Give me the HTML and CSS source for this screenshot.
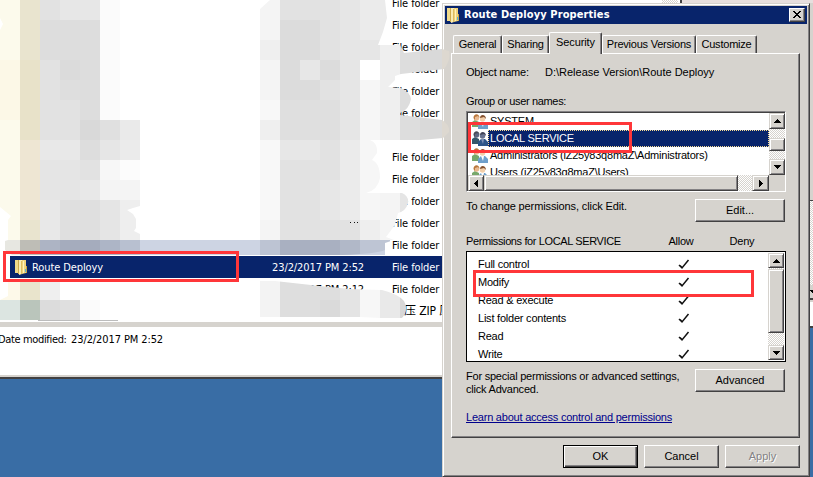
FILE: index.html
```html
<!DOCTYPE html>
<html lang="en">
<head>
<meta charset="utf-8">
<title>Route Deployy Properties</title>
<link rel="stylesheet" href="styles.css">
</head>
<body>
<svg class="defs" width="0" height="0">
  <defs>
    <symbol id="folder" viewBox="0 0 14 16">
      <path d="M1 1h4v13H1z" fill="#f0da8a"/><path d="M4 1h1v14H4z" fill="#cdaa4c"/><path d="M5 1h3v14l-3 1z" fill="#f9ecb4"/><path d="M7 2h1v13H7z" fill="#dcbc60"/><path d="M8 1h4v13l-4 1z" fill="#eed27c"/><path d="M9 2h1v12H9z" fill="#fff3bc"/><path d="M12 7h1v7h-1z" fill="#c9a548"/><path d="M11 10h1v3h-1z" fill="#55b5d9"/>
    </symbol>
    <symbol id="users" viewBox="0 0 16 16">
      <path d="M0 14V9l3-2 4 2v5z" fill="#77a86b"/><circle cx="4.5" cy="5" r="2.7" fill="#e9b990"/><path d="M1.500 5c0-5 6-5 6 0L6 3 3 4 3 7z" fill="#b9773c"/>
      <path d="M6 16v-4l3-3h4l3 3v4z" fill="#6f9fcb"/><path d="M9 9h3l-1 5z" fill="#fff"/><circle cx="10.5" cy="6" r="2.700" fill="#f3cfaa"/><path d="M8 5c0-4 6-4 6 1l-2-2z" fill="#85512e"/>
    </symbol>
    <symbol id="users-dark" viewBox="0 0 16 16">
      <path d="M0 14V9l3-2 4 2v5z" fill="#36576a"/><circle cx="4.5" cy="5" r="2.7" fill="#5d6680"/><path d="M1.5 5c0-5 6-5 6 0L6 3 3 4 3 7z" fill="#4a4b58"/>
      <path d="M6 16v-4l3-3h4l3 3v4z" fill="#2d5588"/><path d="M9 9h3l-1 5z" fill="#7f92b5"/><circle cx="10.5" cy="6" r="2.7" fill="#69738f"/><path d="M8 5c0-4 6-4 6 1l-2-2z" fill="#414357"/>
    </symbol>
    <symbol id="check" viewBox="0 0 12 11"><path d="M1 6l3 3 6.500-8M2 6.500l2 2" fill="none" stroke="#111" stroke-width="1.500"/></symbol>
    <symbol id="up" viewBox="0 0 7 4"><path d="M3 0h1v1h1v1h1v1h1v1H0V3h1V2h1V1h1z"/></symbol>
    <symbol id="down" viewBox="0 0 7 4"><path d="M0 0h7v1H6v1H5v1H4v1H3V3H2V2H1V1H0z"/></symbol>
    <symbol id="left" viewBox="0 0 4 7"><path d="M4 0v7H3V6H2V5H1V4H0V3h1V2h1V1h1V0z"/></symbol>
    <symbol id="right" viewBox="0 0 4 7"><path d="M0 0v7h1V6h1V5h1V4h1V3H3V2H2V1H1V0z"/></symbol>
  </defs>
</svg>

<div class="desktop">
  <section class="explorer">
    <div class="files">
      <div class="file"><span></span><span></span><span>File folder</span></div>
      <div class="file"><span></span><span></span><span>File folder</span></div>
      <div class="file"><span></span><span></span><span>File folder</span></div>
      <div class="file"><span></span><span></span><span>File folder</span></div>
      <div class="file"><span></span><span></span><span>File folder</span></div>
      <div class="file"><span></span><span></span><span>File folder</span></div>
      <div class="file"></div>
      <div class="file"><span></span><span></span><span>File folder</span></div>
      <div class="file"><span></span><span></span><span>File folder</span></div>
      <div class="file"><span></span><span></span><span>File folder</span></div>
      <div class="file"><span></span><span></span><span>File folder</span></div>
      <div class="file"><span></span><span></span><span>File folder</span></div>
      <div class="file selected"><span class="name"><svg width="14" height="16"><use href="#folder"/></svg>Route Deployy</span><span class="date">23/2/2017 PM 2:52</span><span>File folder</span></div>
      <div class="file"><span></span><span class="date">23/2/2017 PM 2:12</span><span>File folder</span></div>
      <div class="file"><span></span><span></span><span class="zip">压 ZIP 压</span></div>
    </div>
    <div class="details"><span class="label">Date modified:</span><span class="date">23/2/2017 PM 2:52</span></div>
  </section>

  <svg class="mosaic" width="452" height="322" viewBox="0 0 452 322" shape-rendering="crispEdges">
    <defs>
      <clipPath id="blob-left"><path d="M0 0H120V120H140V206L133 208L127 210L133 214L136 219V228L134 231L140 234V255H12L5 250V241L8 240V220L11 216L0 207V30L3 24L0 18z"/></clipPath>
      <clipPath id="blob-right"><path d="M270 0H385L387 18L383 32L378 45H400L404 53L442 49L449 51Q451 60 444 69L401 74L395 76V80L388 87L401 88Q410 92 411 99Q409 110 400 113V115L442 120Q450 125 449 132L443 138L420 140H370Q378 143 377 153L372 160Q380 163 380 178Q378 190 366 193H402Q409 196 408 203Q406 211 398 213L395 225L386 237L394 240L385 243L385 250Q376 254 342 255H260V9z"/></clipPath>
      <clipPath id="blob-base"><path d="M8 282H60V300H100V320H0V300L8 296zM260 281H275L320 286L350 289L382 290Q398 294 404 301Q409 310 402 318H380L360 317H260z"/></clipPath>
    </defs>
    <rect x="20" y="240" width="365" height="15" fill="#cdd4e3"/>
    <g clip-path="url(#blob-left)">
      <path fill="#fcfaec" d="M0 0h20v240H0z"/><path fill="#fcf8e7" d="M0 60h20v60H0z"/>
      <path fill="#e9e4cf" d="M20 0h20v240H20z"/><path fill="#e8e2c9" d="M20 60h20v80H20z"/><path fill="#eee6d3" d="M20 140h20v80H20z"/>
      <path fill="#e2e2e2" d="M40 0h60v240H40z"/><path fill="#e7e7e7" d="M60 0h40v20H60z"/><path fill="#fbfbfb" d="M100 0h20v120h-20z"/>
      <path fill="#ddd" d="M40 20h60v40H40zM80 60h20v60H80z"/><path fill="#dbdbdb" d="M60 60h20v20H60z"/><path fill="#dedede" d="M60 80h20v20H60z"/>
      <path fill="#d9d9d9" d="M80 120h20v20H80z"/><path fill="#e0e0e0" d="M100 120h20v20h-20z"/><path fill="#eaeaea" d="M120 120h20v20h-20z"/>
      <path fill="#e8e8e8" d="M40 140h40v20H40z"/><path fill="#ddd" d="M80 140h20v20H80z"/><path fill="#e6e6e6" d="M100 140h20v20h-20z"/><path fill="#ebebeb" d="M120 140h20v20h-20z"/>
      <path fill="#e5e5e5" d="M40 160h40v40H40z"/><path fill="#f7f7f7" d="M100 160h20v20h-20z"/><path fill="#fcfcfc" d="M120 160h20v20h-20z"/>
      <path fill="#e8e8e8" d="M80 180h20v20H80zM40 200h20v40H40z"/><path fill="#f4f4f4" d="M100 180h40v20h-40z"/>
      <path fill="#dfdfdf" d="M60 200h40v40H60z"/><path fill="#e5e5e5" d="M100 200h20v40h-20z"/><path fill="#eee" d="M120 200h20v40h-20z"/>
      <path fill="#e7e7e1" d="M0 240h20v15H0z"/><path fill="#bebdb6" d="M20 240h20v15H20z"/><path fill="#adb4c4" d="M40 240h20v15H40z"/><path fill="#a5acbd" d="M60 240h40v15H60z"/><path fill="#adb5c6" d="M100 240h20v15h-20z"/><path fill="#b8c0d0" d="M120 240h20v15h-20z"/>
    </g>
    <g clip-path="url(#blob-right)">
      <path fill="#f4f4f4" d="M260 0h20v240h-20z"/><path fill="#efefef" d="M260 40h20v20h-20zM260 120h20v20h-20z"/><path fill="#f8f8f8" d="M260 100h20v20h-20zM260 140h20v80h-20z"/>
      <path fill="#e2e2e2" d="M280 0h80v240h-80z"/><path fill="#dcdcdc" d="M280 20h40v40h-40zM280 60h20v40h-20zM320 60h20v20h-20zM300 80h20v60h-20z"/><path fill="#dfdfdf" d="M280 100h60v40h-60z"/><path fill="#e7e7e7" d="M300 60h20v20h-20zM280 140h40v20h-40zM320 180h20v40h-20z"/>
      <path fill="#e6e6e6" d="M340 0h20v140h-20z"/><path fill="#ebebeb" d="M340 140h20v80h-20zM360 0h40v40h-40z"/><path fill="#e6e6e6" d="M360 40h20v20h-20z"/>
      <path fill="#fff" d="M360 60h20v20h-20z"/><path fill="#f6f6f6" d="M360 80h20v140h-20z"/><path fill="#eee" d="M360 220h20v20h-20z"/>
      <path fill="#efefef" d="M380 40h20v100h-20z"/><path fill="#f4f4f4" d="M380 140h20v100h-20z"/><path fill="#ddd" d="M400 40h20v100h-20z"/><path fill="#d9d9d9" d="M420 40h22v100h-22z"/><path fill="#e5e5e5" d="M400 180h20v40h-20z"/><path fill="#ddd8d0" d="M442 40h10v100h-10z"/>
      <path fill="#bdc4d3" d="M260 240h20v15h-20z"/><path fill="#a9b0c1" d="M280 240h60v15h-60z"/><path fill="#b1b8c8" d="M340 240h20v15h-20z"/><path fill="#bec5d4" d="M360 240h30v15h-30z"/>
    </g>
    <g clip-path="url(#blob-base)">
      <path fill="#fdf9e9" d="M0 280h20v20H0z"/><path fill="#e9e4cc" d="M20 280h20v20H20z"/><path fill="#efefef" d="M40 280h20v20H40z"/><path fill="#dce5e1" d="M0 300h20v20H0z"/><path fill="#bac5bb" d="M20 300h20v20H20z"/><path fill="#dcdcdc" d="M40 300h20v20H40z"/><path fill="#dfdfdf" d="M60 300h20v20H60z"/><path fill="#fbfbfb" d="M80 300h20v20H80z"/>
      <path fill="#f3f3f3" d="M260 280h20v40h-20z"/><path fill="#dedede" d="M280 280h60v40h-60z"/><path fill="#dadada" d="M320 300h20v20h-20z"/><path fill="#e4e4e4" d="M340 280h20v40h-20z"/><path fill="#f7f7f7" d="M360 280h20v40h-20z"/><path fill="#e9e9e9" d="M380 280h20v40h-20z"/><path fill="#d7d7d7" d="M400 280h20v40h-20z"/>
    </g>
    <path fill="#bcbcbc" d="M38 320h80v1H38z"/>
    <path fill="#111" d="M350 222h1v1h-1zM354 222h1v1h-1zM357 222h1v1h-1z"/>
  </svg>

  <div class="back-top"><i class="dither"></i><i class="edge"></i></div>
  <div class="back-side"><i class="plain"></i><i class="dither"></i><i class="arrow"><svg width="4" height="4"><use href="#down" width="7" height="4"/></svg></i><i class="blank"></i></div>

  <section class="dialog">
    <header class="title"><svg width="14" height="16"><use href="#folder"/></svg><h1>Route Deployy Properties</h1>
      <button class="close" aria-label="Close"><svg width="8" height="7" viewBox="0 0 8 7" shape-rendering="crispEdges"><path d="M0 0h2v1h1v1h2V1h1V0h2v1H7v1H6v1H5v1h1v1h1v1h1v1H6V6H5V5H3v1H2v1H0V6h1V5h1V4h1V3H2V2H1V1H0z"/></svg></button>
    </header>
    <nav class="tabs"><span class="tab general">General</span><span class="tab sharing">Sharing</span><span class="tab active">Security</span><span class="tab versions">Previous Versions</span><span class="tab customize">Customize</span></nav>
    <main class="panel">
      <div class="object"><span>Object name:</span><span class="path">D:\Release Version\Route Deployy</span></div>
      <div class="caption">Group or user names:</div>
      <div class="group">
        <div class="group-top">
          <div class="group-list">
            <div class="user"><svg width="16" height="16"><use href="#users"/></svg><span>SYSTEM</span></div>
            <div class="user chosen"><svg width="16" height="16"><use href="#users-dark"/></svg><span>LOCAL SERVICE</span></div>
            <div class="user"><svg width="16" height="16"><use href="#users"/></svg><span>Administrators (iZ25y83q8maZ\Administrators)</span></div>
            <div class="user"><svg width="16" height="16"><use href="#users"/></svg><span>Users (iZ25y83q8maZ\Users)</span></div>
          </div>
          <div class="vbar dither"><i class="btn"><svg width="7" height="4"><use href="#up"/></svg></i><i class="btn thumb"></i><i class="btn"><svg width="7" height="4"><use href="#down"/></svg></i></div>
        </div>
        <div class="hbar dither"><i class="btn"><svg width="4" height="7"><use href="#left"/></svg></i><i class="btn thumb"></i><i class="btn next"><svg width="4" height="7"><use href="#right"/></svg></i><i class="corner"></i></div>
      </div>
      <div class="action edit-row"><span class="change">To change permissions, click Edit.</span><button class="push">Edit...</button></div>
      <div class="perm-head"><span class="perm-title">Permissions for LOCAL SERVICE</span><span>Allow</span><span>Deny</span></div>
      <div class="perms">
        <div class="perm-list">
          <div class="perm"><span>Full control</span><svg width="12" height="11"><use href="#check"/></svg></div>
          <div class="perm"><span>Modify</span><svg width="12" height="11"><use href="#check"/></svg></div>
          <div class="perm"><span>Read &amp; execute</span><svg width="12" height="11"><use href="#check"/></svg></div>
          <div class="perm"><span>List folder contents</span><svg width="12" height="11"><use href="#check"/></svg></div>
          <div class="perm"><span>Read</span><svg width="12" height="11"><use href="#check"/></svg></div>
          <div class="perm"><span>Write</span><svg width="12" height="11"><use href="#check"/></svg></div>
        </div>
        <div class="vbar dither"><i class="btn"><svg width="7" height="4"><use href="#up"/></svg></i><i class="btn thumb"></i><i class="btn"><svg width="7" height="4"><use href="#down"/></svg></i></div>
      </div>
      <div class="action special-row"><p>For special permissions or advanced settings,<br>click Advanced.</p><button class="push">Advanced</button></div>
      <a class="learn">Learn about access control and permissions</a>
    </main>
    <footer class="buttons"><button class="push default">OK</button><button class="push">Cancel</button><button class="push disabled">Apply</button></footer>
  </section>

  <div class="mark mark-folder"></div>
  <div class="mark mark-user"></div>
  <div class="mark mark-modify"></div>
</div>
</body>
</html>
```
FILE: styles.css
```css
* { box-sizing: border-box; }
body { margin: 0; font: 11px/13px "Liberation Sans", sans-serif; color: #000; }
svg { display: block; flex: none; }
i { display: block; }
.defs { position: absolute; }
.desktop { position: relative; width: 813px; height: 477px; overflow: hidden; background: #396da5; }
.dither { background: repeating-conic-gradient(#fff 0 25%, #d6d3ce 0 50%) 0 0 / 2px 2px; }

/* Explorer window */
.explorer { position: absolute; left: 0; top: 0; width: 445px; height: 379px; overflow: hidden; background: #fff; border-bottom: 2px solid #424142; font-family: "DejaVu Sans Condensed", "DejaVu Sans", sans-serif; font-stretch: condensed; font-size: 11px; letter-spacing: -.1px; }
.files { margin-top: -8px; height: 335px; width: 442px; border-bottom: 5px solid #d6d3ce; }
.file { display: grid; grid-template-columns: 262px 120px 50px; margin-left: 10px; height: 22px; align-items: center; white-space: nowrap; overflow: hidden; }
.file.selected { background: #08246b; color: #fff; }
.name { display: flex; align-items: center; gap: 4px; padding-left: 4px; }
.zip { font-family: "DejaVu Sans Condensed", "Noto Sans CJK SC", sans-serif; font-size: 12px; padding-left: 12px; }
.details { height: 50px; border-bottom: 2px solid #d6d3ce; padding-top: 6px; display: flex; gap: 5px; }
.details .label { margin-left: -2px; width: 68px; white-space: nowrap; letter-spacing: -.35px; }
.mosaic { position: absolute; left: 0; top: 0; z-index: 3; }

/* Slivers of the window behind the dialog */
.back-top { position: absolute; left: 445px; top: 0; width: 368px; height: 4px; background: #fff; display: flex; padding-left: 217px; }
.back-top .dither { width: 16px; }
.back-top .edge { flex: 1; margin-left: 2px; border-left: 2px solid #424142; background: #e7dfde; }
.back-side { position: absolute; left: 809px; top: 3px; width: 4px; height: 325px; }
.back-side .plain { height: 198px; background: #d6d3ce; border-bottom: 1px solid #424142; }
.back-side .dither { height: 84px; }
.back-side .arrow { height: 15px; background: #d6d3ce; border-bottom: 2px solid #424142; padding: 5px 0 0 1px; }
.back-side .blank { height: 28px; background: #fff; border-top: 2px solid #d6d3ce; border-bottom: 2px solid #424142; }

/* Dialog */
.dialog { position: absolute; left: 442px; top: 3px; width: 368px; height: 474px; background: #d6d3ce; border: 1px solid; border-color: #d6d3ce #424142 #424142 #d6d3ce; box-shadow: inset 1px 1px #fff, inset -1px -1px #848284; padding: 2px; letter-spacing: -.22px; }
.title { display: flex; align-items: center; height: 18px; background: #08246b; color: #fff; padding: 0 2px 0 1px; }
.title h1 { margin: 0 auto 0 4px; font: bold 11px/18px "DejaVu Sans Condensed", "DejaVu Sans", sans-serif; font-stretch: condensed; letter-spacing: .1px; }
button { font: inherit; color: inherit; letter-spacing: 0; padding: 0; display: flex; align-items: center; justify-content: center; background: #d6d3ce; border: 1px solid; border-color: #fff #424142 #424142 #fff; box-shadow: inset -1px -1px #848284; }
.push { padding-bottom: 1px; }
.close { width: 16px; height: 14px; color: #000; padding: 0 1px 1px 0; }
.tabs { display: flex; align-items: flex-end; height: 29px; padding-left: 8px; }
.tab { height: 18px; line-height: 16px; text-align: center; border: 1px solid #fff; border-right-color: #424142; border-bottom: 0; border-radius: 2px 2px 0 0; box-shadow: inset -1px 0 #848284; white-space: nowrap; }
.general { width: 49px; } .sharing { width: 47px; }
.tab.active { width: 53px; height: 22px; line-height: 19px; margin-bottom: -1px; background: #d6d3ce; z-index: 1; letter-spacing: -.1px; }
.versions { width: 94px; } .customize { width: 61px; }
.panel { margin-left: 6px; width: 349px; height: 385px; border: 1px solid; border-color: #fff #424142 #424142 #fff; box-shadow: inset -1px -1px #848284; padding: 12px 13px 0 14px; }
.object { display: flex; height: 13px; white-space: nowrap; }
.object span:first-child { width: 79px; }
.object .path { letter-spacing: 0; }
.caption { margin-top: 16px; letter-spacing: -.35px; }
.group { margin-top: 3px; width: 320px; height: 81px; border: 1px solid; border-color: #848284 #fff #fff #848284; box-shadow: inset 1px 1px #424142; padding: 1px; }
.group-top { display: flex; height: 62px; background: #fff; width: 317px; }
.group-list { flex: 1; overflow: hidden; }
.user { display: flex; height: 17px; padding-left: 4px; white-space: nowrap; }
.user span { flex: 1; line-height: 17px; padding-left: 2px; }
.chosen span { background: #08246b; color: #fff; outline: 1px dotted #f7db94; outline-offset: -1px; }
.vbar { width: 16px; display: flex; flex-direction: column; }
.btn { width: 100%; height: 16px; flex: none; display: flex; align-items: center; justify-content: center; background: #d6d3ce; border: 1px solid; border-color: #d6d3ce #424142 #424142 #d6d3ce; box-shadow: inset 1px 1px #fff, inset -1px -1px #848284; }
.group .vbar .thumb { height: 13px; margin: 9px 0 8px; }
.hbar { display: flex; height: 16px; width: 317px; }
.hbar .btn { width: 16px; }
.hbar .thumb { width: 254px; margin-right: 14px; }
.hbar .next { width: 17px; }
.corner { flex: 1; background: #d6d3ce; }
.action { display: flex; justify-content: space-between; width: 319px; white-space: nowrap; }
.push { width: 90px; height: 23px; }
.edit-row { margin-top: 7px; }
.change { padding-top: 1px; letter-spacing: -.12px; }
.perm-head { display: grid; grid-template-columns: 184px 62px 60px; text-align: center; margin-top: 13px; }
.perm-title { text-align: left; letter-spacing: -.38px; }
.perms { margin-top: 3px; width: 320px; height: 111px; border: 1px solid #000; display: flex; background: #fff; padding: 1px; }
.perm-list { flex: 1; padding-top: 2px; overflow: hidden; }
.perm { display: grid; grid-template-columns: 200px 12px; padding-left: 10px; height: 18px; align-items: center; }
.perms .btn { height: 15px; }
.perms .thumb { height: 64px; margin: 1px 0 auto; }
.special-row { margin-top: 7px; }
p { margin: 1px 0 0; }
.learn { display: block; margin-top: 15px; color: #00008c; text-decoration: underline; white-space: nowrap; }
.buttons { display: flex; gap: 6px; margin: 7px 0 0 118px; }
.buttons .push { width: 75px; }
.buttons .default { border-color: #000; box-shadow: inset 1px 1px #fff, inset -1px -1px #424142, inset -2px -2px #848284; }
.disabled { color: #848284; text-shadow: 1px 1px #fff; }

/* Highlight frames */
.mark { position: absolute; z-index: 5; border: 3px solid #ff3639; }
.mark-folder { left: 3px; top: 251px; width: 236px; height: 31px; }
.mark-user { left: 468px; top: 122px; width: 164px; height: 31px; }
.mark-modify { left: 473px; top: 270px; width: 281px; height: 27px; }
```
